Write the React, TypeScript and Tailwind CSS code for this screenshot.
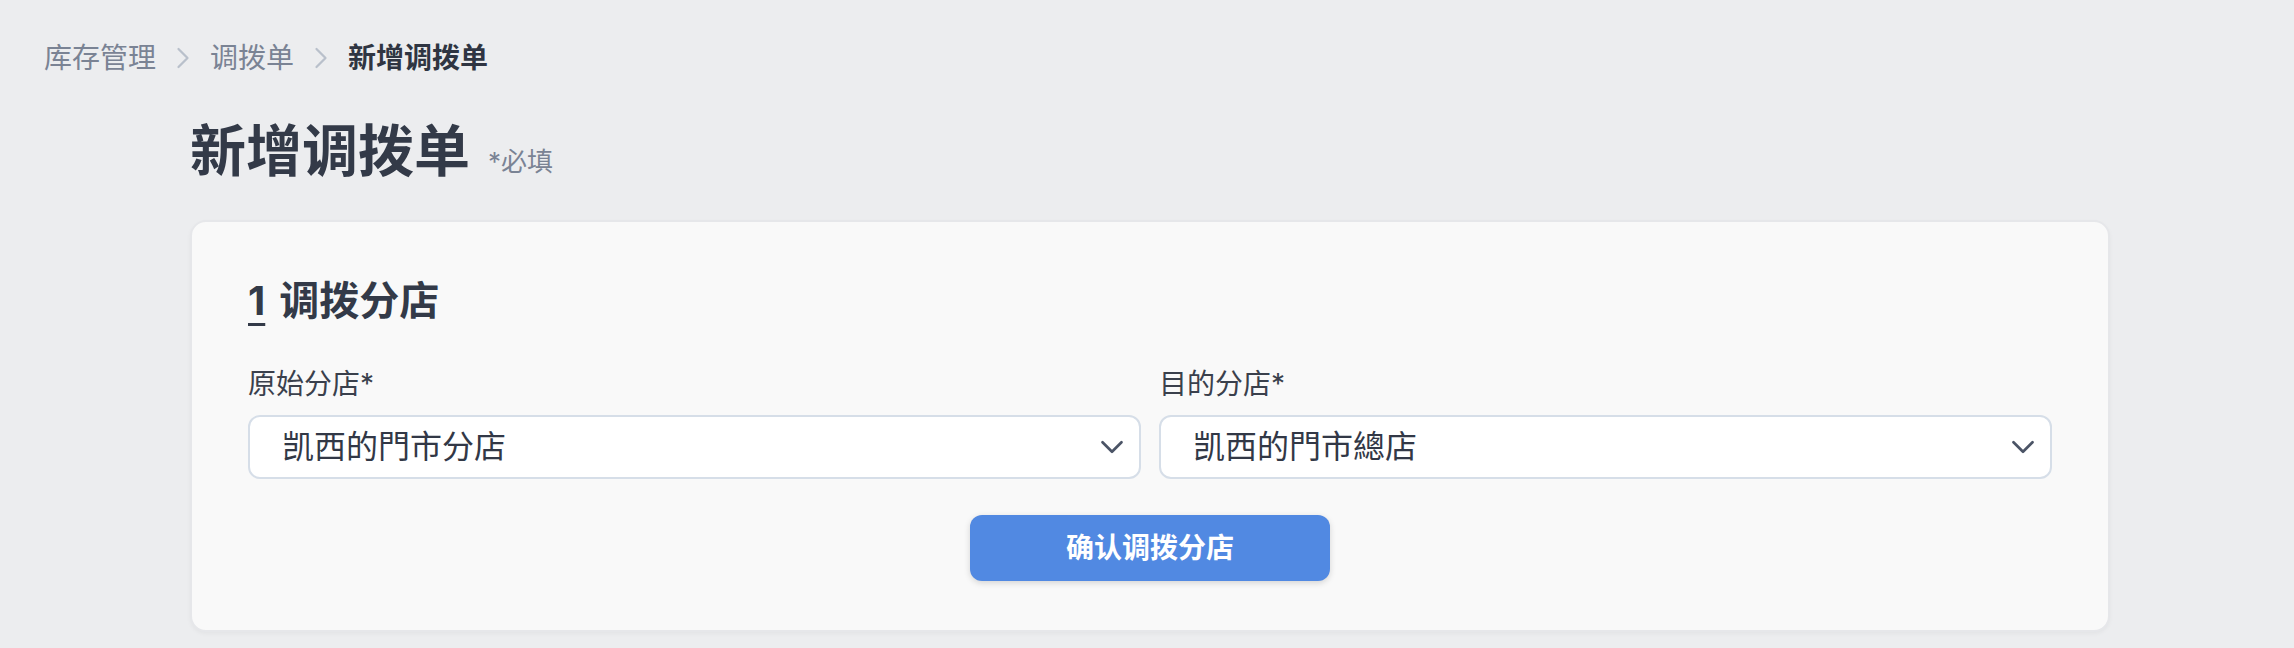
import { ChevronRight, ChevronDown } from 'lucide-react';

const font = { fontFamily: 'Inter, "Noto Sans CJK SC", sans-serif' };

type StoreSelectProps = {
  label: string;
  value: string;
};

function StoreSelect({ label, value }: StoreSelectProps) {
  return (
    <div className="flex flex-col">
      <label className="text-[28px] leading-[40px] text-[#3a404c] mb-[11px]">{label}*</label>
      <div className="flex items-center justify-between h-[64px] pl-[32px] pr-[8px] bg-white border-2 border-[#d6dee8] rounded-[12px]">
        <span className="text-[32px] text-[#323846]">{value}</span>
        <ChevronDown className="w-[38px] h-[38px] text-[#4b5466]" strokeWidth={1.7} />
      </div>
    </div>
  );
}

export default function App() {
  return (
    <div className="min-h-screen bg-[#ecedef] pt-[38px]" style={font}>
      {/* Breadcrumb */}
      <nav className="flex items-center gap-[9px] px-[44px] text-[28px] leading-[40px]">
        <span className="text-[#7a8394]">库存管理</span>
        <ChevronRight className="w-[36px] h-[36px] text-[#b9c0cb]" strokeWidth={1.5} />
        <span className="text-[#7a8394]">调拨单</span>
        <ChevronRight className="w-[36px] h-[36px] text-[#b9c0cb]" strokeWidth={1.5} />
        <span className="font-bold text-[#2f3542]">新增调拨单</span>
      </nav>

      <div className="w-[1920px] ml-[190px]">
        {/* Title */}
        <div className="flex items-baseline gap-[18px] mt-[40px] mb-[35px]">
          <h1 className="text-[56px] leading-[67px] font-bold text-[#333a48]">新增调拨单</h1>
          <span className="text-[26px] text-[#7a8394]">*必填</span>
        </div>

        {/* Card */}
        <div className="bg-[#f9f9f9] rounded-[16px] border-2 border-[#e6e7ea] shadow-[0_2px_4px_rgba(0,0,0,0.04)] px-[56px] pt-[51px] pb-[49px]">
          <h2 className="flex items-center gap-[14px] text-[40px] leading-[56px] font-bold text-[#333a48]">
            <span className="underline decoration-[3px] underline-offset-[8px]">1</span>
            <span>调拨分店</span>
          </h2>

          <div className="grid grid-cols-2 gap-[18px] mt-[35px]">
            <StoreSelect label="原始分店" value="凯西的門市分店" />
            <StoreSelect label="目的分店" value="凯西的門市總店" />
          </div>

          <div className="flex justify-center mt-[36px]">
            <button className="w-[360px] h-[66px] rounded-[12px] bg-[#5189e2] text-white text-[28px] font-bold shadow-[0_2px_6px_rgba(0,0,0,0.15)]">
              确认调拨分店
            </button>
          </div>
        </div>
      </div>
    </div>
  );
}
